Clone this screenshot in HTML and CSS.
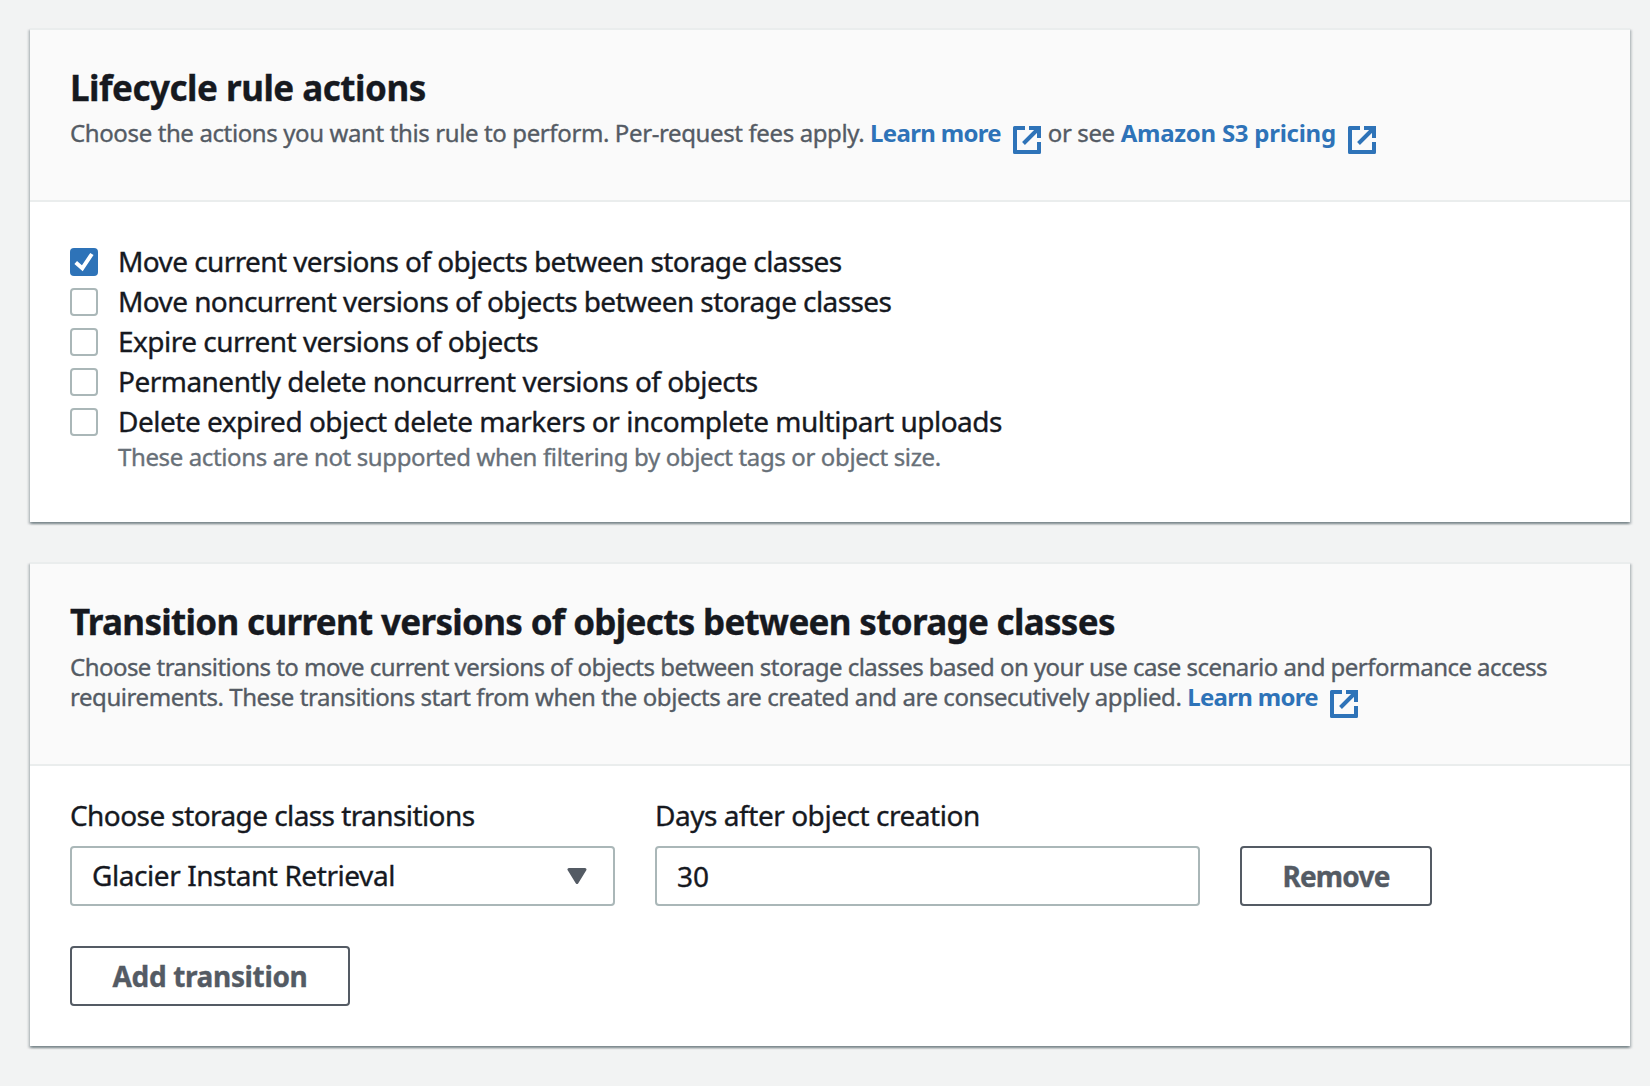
FILE: index.html
```html
<!DOCTYPE html>
<html lang="en">
<head>
<meta charset="utf-8">
<title>Lifecycle rule</title>
<link rel="stylesheet" href="styles.css">
</head>
<body>
<svg width="0" height="0" class="sprite" aria-hidden="true">
  <symbol id="external" viewBox="0 0 28 28">
    <path d="M12 0H1.5Q0 0 0 1.5V26.5Q0 28 1.5 28H26.5Q28 28 28 26.5V16H24V24H4V4H12Z" fill="currentColor"/>
    <path d="M16 2H26V12M26 2L10.5 17.5" fill="none" stroke="currentColor" stroke-width="4"/>
  </symbol>
</svg>
<main class="page">
  <section class="card">
    <header class="card-header">
      <h2 class="title">Lifecycle rule actions</h2>
      <p class="desc">Choose the actions you want this rule to perform. Per-request fees apply. <a class="link">Learn more<svg class="ext"><use href="#external"/></svg></a> or see <a class="link pricing">Amazon S3 pricing<svg class="ext"><use href="#external"/></svg></a></p>
    </header>
    <div class="options">
      <label class="option tight"><span class="box checked"><svg viewBox="0 0 28 28"><path d="M5.7 14.6L12.3 20.3L21.9 6" fill="none" stroke="#fff" stroke-width="4"/></svg></span>Move current versions of objects between storage classes</label>
      <label class="option tight"><span class="box"></span>Move noncurrent versions of objects between storage classes</label>
      <label class="option"><span class="box"></span>Expire current versions of objects</label>
      <label class="option"><span class="box"></span>Permanently delete noncurrent versions of objects</label>
      <label class="option loose"><span class="box"></span>Delete expired object delete markers or incomplete multipart uploads</label>
      <p class="hint">These actions are not supported when filtering by object tags or object size.</p>
    </div>
  </section>
  <section class="card">
    <header class="card-header">
      <h2 class="title wide">Transition current versions of objects between storage classes</h2>
      <p class="desc wide">Choose transitions to move current versions of objects between storage classes based on your use case scenario and performance access<br><span class="second">requirements. These transitions start from when the objects are created and are consecutively applied.</span> <a class="link">Learn more<svg class="ext"><use href="#external"/></svg></a></p>
    </header>
    <div class="form">
      <div class="fields">
        <div class="field">
          <span class="label">Choose storage class transitions</span>
          <div class="control select">Glacier Instant Retrieval<svg class="caret" viewBox="0 0 20 16"><path d="M2 1.5H18L10 14.5Z" fill="currentColor" stroke="currentColor" stroke-width="3" stroke-linejoin="round"/></svg></div>
        </div>
        <div class="field">
          <span class="label days">Days after object creation</span>
          <div class="control number">30</div>
        </div>
        <button class="button remove">Remove</button>
      </div>
      <button class="button add">Add transition</button>
    </div>
  </section>
</main>
</body>
</html>
```
FILE: styles.css
```css
* { box-sizing: border-box; margin: 0; padding: 0; }
body {
  background: #f2f3f3;
  color: #16191f;
  font-family: "Noto Sans", "Open Sans", sans-serif;
  font-size: 28px;
  -webkit-text-stroke: .35px currentColor;
}
.sprite { display: block; }
.page {
  display: flex;
  flex-direction: column;
  gap: 40px;
  padding: 28px 20px 40px 30px;
}
.card {
  background: #fff;
  border-top: 2px solid #eaeded;
  box-shadow: 0 2px 2px 0 rgba(0, 28, 36, .3), 2px 2px 2px 0 rgba(0, 28, 36, .15), -2px 2px 2px 0 rgba(0, 28, 36, .15);
}
.card-header {
  background: #fafafa;
  border-bottom: 2px solid #eaeded;
  padding: 36px 40px 52px;
}
.title {
  font-size: 35px;
  line-height: 44px;
  font-weight: 700;
  letter-spacing: -.5px;
  white-space: nowrap;
}
.title.wide { letter-spacing: -.68px; }
.desc {
  margin-top: 8px;
  color: #545b64;
  font-size: 24px;
  line-height: 30px;
  letter-spacing: -.382px;
  white-space: nowrap;
}
.desc.wide { letter-spacing: -.534px; }
.second { letter-spacing: -.433px; }
.link {
  color: #2e73b8;
  font-weight: 700;
  letter-spacing: -.68px;
  -webkit-text-stroke: 0;
}
.link.pricing { letter-spacing: -.26px; }
.ext {
  width: 28px;
  height: 28px;
  margin: 0 1px -6px 12px;
  vertical-align: -6px;
}
.options { padding: 40px 40px 50px; }
.option {
  display: flex;
  gap: 20px;
  height: 40px;
  line-height: 38px;
  letter-spacing: -.52px;
}
.option.tight { letter-spacing: -.587px; }
.option.loose { letter-spacing: -.487px; }
.box {
  width: 28px;
  height: 28px;
  margin-top: 6px;
  border: 2px solid #aab7b8;
  border-radius: 4px;
  background: #fff;
}
.box.checked { border: 0; background: #2e73b8; }
.box svg { display: block; }
.hint {
  padding-left: 48px;
  color: #687078;
  font-size: 24px;
  line-height: 30px;
  letter-spacing: -.37px;
}
.form { padding: 29px 40px 40px; }
.fields {
  display: flex;
  align-items: flex-end;
  gap: 40px;
  margin-bottom: 40px;
}
.field {
  display: flex;
  flex-direction: column;
  gap: 11px;
  width: 545px;
}
.label { line-height: 40px; letter-spacing: -.58px; }
.label.days { letter-spacing: -.46px; }
.control {
  display: flex;
  justify-content: space-between;
  height: 60px;
  padding: 0 26px 0 20px;
  border: 2px solid #aab7b8;
  border-radius: 4px;
  line-height: 54px;
}
.select { letter-spacing: -.434px; }
.number { line-height: 56px; }
.caret { width: 20px; height: 16px; margin-top: 20px; color: #545b64; }
.button {
  display: block;
  height: 60px;
  padding-bottom: 1px;
  border: 2px solid #545b64;
  border-radius: 4px;
  background: #fff;
  color: #545b64;
  font: 700 28px/54px "Noto Sans", "Open Sans", sans-serif;
  letter-spacing: -.35px;
}
.remove { width: 192px; letter-spacing: -.8px; }
.add { width: 280px; }
```
